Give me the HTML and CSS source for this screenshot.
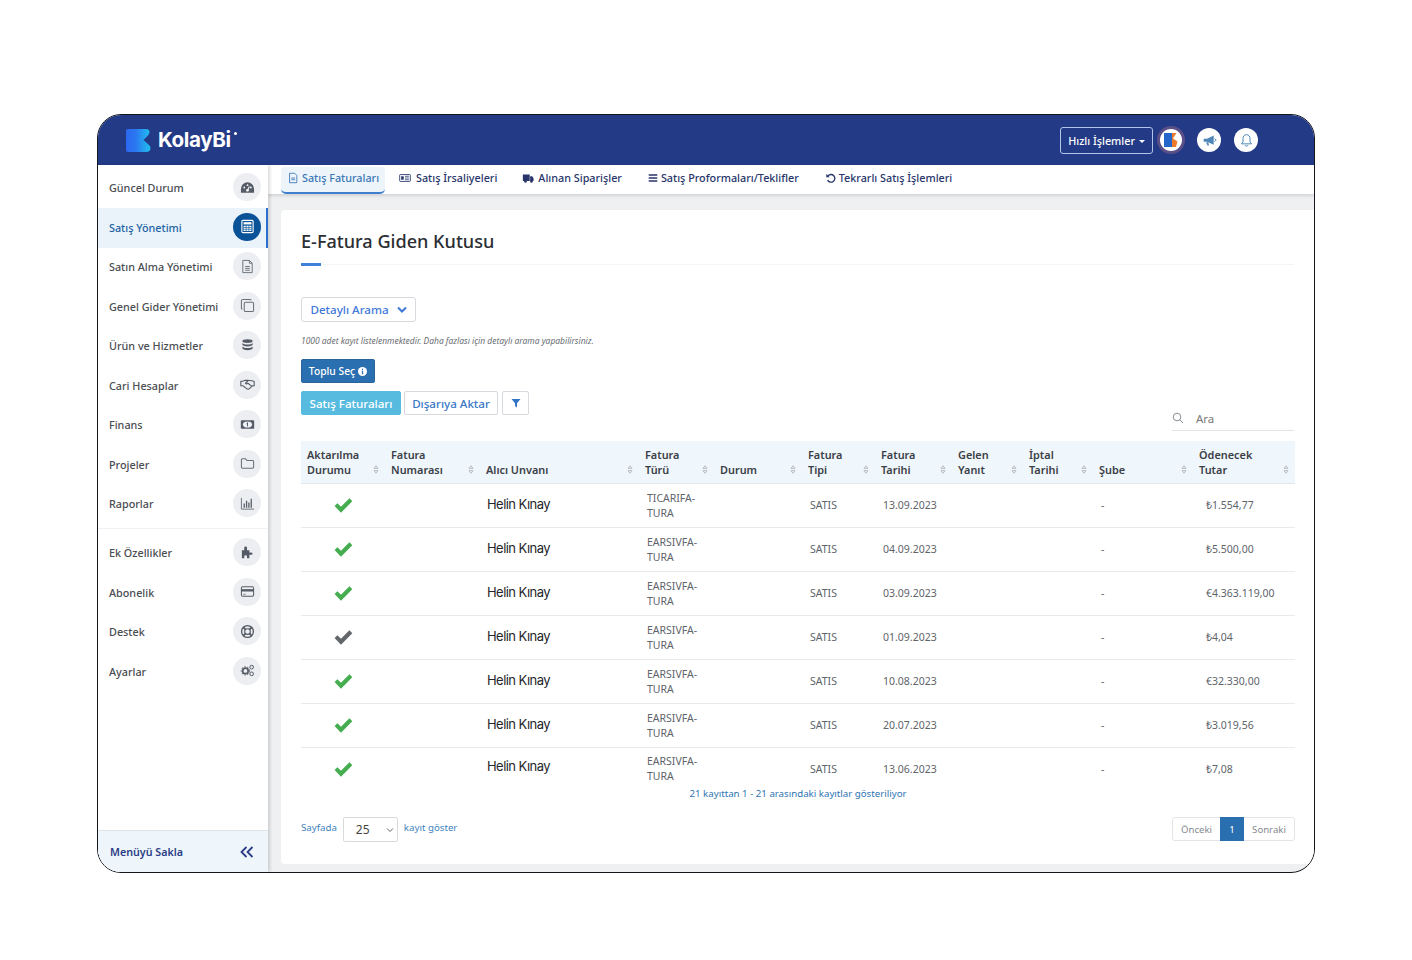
FILE: index.html
```html
<!DOCTYPE html>
<html lang="tr">
<head>
<meta charset="utf-8">
<title>KolayBi</title>
<link rel="stylesheet" href="styles.css">
</head>
<body>
<svg class="defs" width="0" height="0" aria-hidden="true">
  <symbol id="check" viewBox="0 0 20 16"><path d="M1.5 8.5 4.2 5.8 7.6 9.2 15.6 1.2 18.4 4 7.6 14.8Z" fill="currentColor"/></symbol>
  <symbol id="sort" viewBox="0 0 6 10"><path d="M3 .8 5.2 3.8H.8Z M3 9.2 .8 6.2H5.2Z" fill="none" stroke="currentColor" stroke-width=".8"/></symbol>
  <linearGradient id="lg" x1="0" y1="0" x2="1" y2="0"><stop offset="0" stop-color="#2b68f0"/><stop offset=".4" stop-color="#2b78f0"/><stop offset="1" stop-color="#20c0f0"/></linearGradient>
</svg>
<div class="frame">
  <header class="topbar">
    <div class="logo">
      <svg class="logo-mark" viewBox="0 0 25 23"><path d="M2 0H20Q23.500 0 23.500 3 23.500 5 21.500 7L17.500 11 22.500 15.500Q24.500 17 24.500 19 24.500 23 20 23H2A2 2 0 0 1 0 21V2A2 2 0 0 1 2 0Z" fill="url(#lg)"/></svg>
      <span class="logo-text">KolayBi</span><span class="logo-dot"></span>
    </div>
    <div class="top-actions">
      <button class="quick">Hızlı İşlemler <span class="caret"></span></button>
      <span class="halo"><span class="round"><svg viewBox="0 0 18 18" width="18" height="18"><path d="M2 2H10V16H2Z" fill="#2466c9"/><path d="M10 2H14.500L11 7.500 15.500 10.500 14 16H10Z" fill="#ef7a2c"/></svg></span></span>
      <span class="round"><svg viewBox="0 0 18 18" width="15" height="15"><path d="M2 7H6L14 3V14L6 10.500H2Z" fill="#4f86b8"/><path d="M5 11 6.500 15H8.500L7.500 11Z" fill="#4f86b8"/><path d="M15 6.500 17 8.500 15 10.500" fill="none" stroke="#4f86b8" stroke-width="1.200"/></svg></span>
      <span class="round"><svg viewBox="0 0 18 18" width="15" height="15"><path d="M9 2C6 2 4.800 4.400 4.800 7V10.500L3 13H15L13.200 10.500V7C13.200 4.400 12 2 9 2Z M7.200 14.500C7.500 16.200 10.500 16.200 10.800 14.500" fill="none" stroke="#4f86b8" stroke-width="1.200"/></svg></span>
    </div>
  </header>
  <div class="main">
    <aside class="sidebar">
      <nav class="menu">
        <a class="item"><span>Güncel Durum</span><i class="ico"><svg viewBox="0 0 16 16"><path d="M8 2.500A7 7 0 0 0 1 9.500V13.500H15V9.500A7 7 0 0 0 8 2.500Z" fill="#555b66"/><circle cx="4.500" cy="8" r="1" fill="#eef0f3"/><circle cx="8" cy="5.500" r="1" fill="#eef0f3"/><circle cx="11.500" cy="8" r="1" fill="#eef0f3"/><path d="M8 11 10 7" stroke="#eef0f3" stroke-width="1.200"/><circle cx="8" cy="11" r="1.500" fill="#eef0f3"/></svg></i></a>
        <a class="item active"><span>Satış Yönetimi</span><i class="ico"><svg viewBox="0 0 16 16"><rect x="2" y="1.500" width="12" height="13" rx="1.200" fill="none" stroke="#fff" stroke-width="1.200"/><rect x="3.800" y="3.400" width="8.400" height="2.400" fill="#fff"/><path d="M3.800 7.200H12.200V12.800H3.800Z" fill="#fff"/><path d="M6.500 7V13M9.500 7V13M3.500 9.100H12.500M3.500 11H12.500" stroke="#0a5298" stroke-width=".7"/></svg></i></a>
        <a class="item"><span>Satın Alma Yönetimi</span><i class="ico"><svg viewBox="0 0 16 16"><path d="M3 1.500H10L13 4.500V14.500H3Z M10 1.500V4.500H13 M5.500 8H10.500M5.500 10H10.500M5.500 12H10.500" fill="none" stroke="#6a7079" stroke-width="1"/></svg></i></a>
        <a class="item"><span>Genel Gider Yönetimi</span><i class="ico"><svg viewBox="0 0 16 16"><rect x="4.500" y="4.500" width="10" height="10" rx="1.500" fill="none" stroke="#6a7079" stroke-width="1.100"/><path d="M12 2.500A1.200 1.200 0 0 0 11 1.500H3A1.500 1.500 0 0 0 1.500 3V11A1.200 1.200 0 0 0 2.500 12" fill="none" stroke="#6a7079" stroke-width="1.100"/></svg></i></a>
        <a class="item"><span>Ürün ve Hizmetler</span><i class="ico"><svg viewBox="0 0 16 16"><ellipse cx="8" cy="3.200" rx="5.500" ry="2" fill="#555b66"/><path d="M2.500 5V7C2.500 8.200 5 9 8 9S13.500 8.200 13.500 7V5C13.500 6.200 11 7 8 7S2.500 6.200 2.500 5Z M2.500 8.800V11C2.500 12.200 5 13 8 13S13.500 12.200 13.500 11V8.800C13.500 10 11 10.700 8 10.700S2.500 10 2.500 8.800Z" fill="#555b66"/></svg></i></a>
        <a class="item"><span>Cari Hesaplar</span><i class="ico"><svg viewBox="0 0 18 16"><path d="M1 4H3.500L6 3H9.500L13 3.500H15L17 4.500V9.500H15L10.500 13.500Q9 14 8 13L3.500 9.500H1Z" fill="none" stroke="#555b66" stroke-width="1.300"/><path d="M9.500 3.500 6.500 6.500Q7.500 8 9.500 6.500L14 10" fill="none" stroke="#555b66" stroke-width="1.300"/></svg></i></a>
        <a class="item"><span>Finans</span><i class="ico"><svg viewBox="0 0 18 16"><rect x="1" y="2.800" width="16" height="10.400" rx="1" fill="#555b66"/><ellipse cx="9" cy="8" rx="5.500" ry="3.700" fill="#eef0f3"/><path d="M9 5.800V10.200M8 6.500 9 5.800" stroke="#555b66" stroke-width="1.200" fill="none"/></svg></i></a>
        <a class="item"><span>Projeler</span><i class="ico"><svg viewBox="0 0 16 16"><path d="M1.500 4A1 1 0 0 1 2.500 3H6L7.500 4.800H13.500A1 1 0 0 1 14.500 5.800V12A1 1 0 0 1 13.500 13H2.500A1 1 0 0 1 1.500 12Z" fill="none" stroke="#6a7079" stroke-width="1.100"/></svg></i></a>
        <a class="item"><span>Raporlar</span><i class="ico"><svg viewBox="0 0 16 16"><path d="M1.500 2V14H15" fill="none" stroke="#6a7079" stroke-width="1"/><path d="M4.500 8V12.500M7 5V12.500M9.500 7V12.500M12 3V12.500" stroke="#5a606a" stroke-width="1.400"/></svg></i></a>
        <div class="rule"></div>
        <a class="item"><span>Ek Özellikler</span><i class="ico"><svg viewBox="0 0 16 16"><path d="M2 5.500H4.500V3Q4.500 1.500 6 1.500T7.500 3V5.500H10V8H11.500Q13.500 8 13.500 9.300T11.500 10.500H10V14H7.500V12.500Q7.500 11 6 11T4.500 12.500V14H2Z" fill="#555b66"/></svg></i></a>
        <a class="item"><span>Abonelik</span><i class="ico"><svg viewBox="0 0 16 16"><rect x="1.500" y="3" width="13" height="10" rx="1.300" fill="none" stroke="#555b66" stroke-width="1.100"/><rect x="1.500" y="5.500" width="13" height="2.500" fill="#555b66"/><path d="M3.500 11H6" stroke="#555b66" stroke-width=".8"/></svg></i></a>
        <a class="item"><span>Destek</span><i class="ico"><svg viewBox="0 0 16 16"><circle cx="8" cy="8" r="6.300" fill="none" stroke="#555b66" stroke-width="1.400"/><circle cx="8" cy="8" r="3" fill="none" stroke="#555b66" stroke-width="1.200"/><path d="M3.500 3.500 6 6M12.500 3.500 10 6M3.500 12.500 6 10M12.500 12.500 10 10" stroke="#555b66" stroke-width="2"/></svg></i></a>
        <a class="item"><span>Ayarlar</span><i class="ico"><svg viewBox="0 0 18 16"><circle cx="6.500" cy="8.500" r="3.300" fill="none" stroke="#555b66" stroke-width="2"/><circle cx="6.500" cy="8.500" r="5" fill="none" stroke="#555b66" stroke-width="1.200" stroke-dasharray="1.800 1.800"/><circle cx="14" cy="4" r="2.200" fill="none" stroke="#555b66" stroke-width="1.200"/><circle cx="14" cy="12" r="2.200" fill="none" stroke="#555b66" stroke-width="1.200"/></svg></i></a>
      </nav>
      <div class="hide-menu">
        <span>Menüyü Sakla</span>
        <svg viewBox="0 0 14 12" width="14" height="12"><path d="M6.500 1 1.500 6 6.500 11M12.500 1 7.500 6 12.500 11" fill="none" stroke="#2b3d86" stroke-width="1.800"/></svg>
      </div>
    </aside>
    <div class="content">
      <div class="tabs">
        <a class="tab on"><svg viewBox="0 0 14 14"><path d="M3 1.500H9L11.500 4V12.500H3Z M5 7H9.500M5 9H9.500" fill="none" stroke="#3b75b5" stroke-width="1"/></svg>Satış Faturaları</a>
        <a class="tab t2"><svg viewBox="0 0 14 14"><rect x=".8" y="3" width="12.400" height="8" rx=".8" fill="none" stroke="#27356a" stroke-width="1"/><rect x="2.500" y="5" width="3" height="4" fill="#27356a"/><path d="M7 5H11.500M7 7H11.500M7 9H11.500" stroke="#27356a" stroke-width=".9"/></svg>Satış İrsaliyeleri</a>
        <a class="tab t3"><svg viewBox="0 0 14 14"><path d="M1 3H9V10.500H1Z M9.500 5H12L13.500 7.500V10.500H9.500Z" fill="#27356a"/><circle cx="4" cy="11" r="1.500" fill="#27356a"/><circle cx="11" cy="11" r="1.500" fill="#27356a"/></svg>Alınan Siparişler</a>
        <a class="tab t4"><svg viewBox="0 0 14 14"><path d="M2 3.500H12M2 7H12M2 10.500H12" stroke="#27356a" stroke-width="1.500"/></svg>Satış Proformaları/Teklifler</a>
        <a class="tab t5"><svg viewBox="0 0 14 14"><path d="M3.500 4.500A4.500 4.500 0 1 1 3 9.500" fill="none" stroke="#27356a" stroke-width="1.600"/><path d="M1.500 2V6H5.500Z" fill="#27356a"/></svg>Tekrarlı Satış İşlemleri</a>
      </div>
      <section class="card">
        <h1>E-Fatura Giden Kutusu</h1>
        <div class="title-rule"><span></span></div>
        <button class="detail">Detaylı Arama <svg viewBox="0 0 10 8" width="10" height="8"><path d="M1 1.500 5 5.500 9 1.500" fill="none" stroke="#3f78d6" stroke-width="2"/></svg></button>
        <p class="note">1000 adet kayıt listelenmektedir. Daha fazlası için detaylı arama yapabilirsiniz.</p>
        <button class="bulk">Toplu Seç <svg viewBox="0 0 10 10" width="9" height="9"><circle cx="5" cy="5" r="5" fill="#fff"/><path d="M5 4.200V8M5 2V3.200" stroke="#2a6fb0" stroke-width="1.400"/></svg></button>
        <div class="btn-row">
          <button class="b-cyan">Satış Faturaları</button>
          <button class="b-line">Dışarıya Aktar</button>
          <button class="b-line b-filter"><svg viewBox="0 0 10 10" width="10" height="10"><path d="M.5 1H9.500L6 5.200V9.500L4 8V5.200Z" fill="#3273c4"/></svg></button>
        </div>
        <div class="search">
          <div class="search-box"><svg viewBox="0 0 12 12" width="12" height="12"><circle cx="5" cy="5" r="3.800" fill="none" stroke="#8a8f96" stroke-width="1"/><path d="M7.800 7.800 11 11" stroke="#8a8f96" stroke-width="1"/></svg><span>Ara</span></div>
        </div>
        <table class="grid">
          <colgroup>
            <col class="c1"><col class="c2"><col class="c3"><col class="c4"><col class="c5"><col class="c6"><col class="c7"><col class="c8"><col class="c9"><col class="c10"><col class="c11">
          </colgroup>
          <thead>
            <tr>
              <th><div class="hd"><span>Aktarılma<br>Durumu</span><svg class="s"><use href="#sort"/></svg></div></th>
              <th><div class="hd"><span>Fatura<br>Numarası</span><svg class="s"><use href="#sort"/></svg></div></th>
              <th><div class="hd"><span>Alıcı Unvanı</span><svg class="s"><use href="#sort"/></svg></div></th>
              <th><div class="hd"><span>Fatura<br>Türü</span><svg class="s"><use href="#sort"/></svg></div></th>
              <th><div class="hd"><span>Durum</span><svg class="s"><use href="#sort"/></svg></div></th>
              <th><div class="hd"><span>Fatura<br>Tipi</span><svg class="s"><use href="#sort"/></svg></div></th>
              <th><div class="hd"><span>Fatura<br>Tarihi</span><svg class="s"><use href="#sort"/></svg></div></th>
              <th><div class="hd"><span>Gelen<br>Yanıt</span><svg class="s"><use href="#sort"/></svg></div></th>
              <th><div class="hd"><span>İptal<br>Tarihi</span><svg class="s"><use href="#sort"/></svg></div></th>
              <th><div class="hd"><span>Şube</span><svg class="s"><use href="#sort"/></svg></div></th>
              <th><div class="hd"><span>Ödenecek<br>Tutar</span><svg class="s"><use href="#sort"/></svg></div></th>
            </tr>
          </thead>
          <tbody>
            <tr><td class="ok"><svg><use href="#check"/></svg></td><td></td><td class="name">Helin Kınay</td><td>TICARIFA-<br>TURA</td><td></td><td>SATIS</td><td>13.09.2023</td><td></td><td></td><td class="dash">-</td><td class="amt">₺1.554,77</td></tr>
            <tr><td class="ok"><svg><use href="#check"/></svg></td><td></td><td class="name">Helin Kınay</td><td>EARSIVFA-<br>TURA</td><td></td><td>SATIS</td><td>04.09.2023</td><td></td><td></td><td class="dash">-</td><td class="amt">₺5.500,00</td></tr>
            <tr><td class="ok"><svg><use href="#check"/></svg></td><td></td><td class="name">Helin Kınay</td><td>EARSIVFA-<br>TURA</td><td></td><td>SATIS</td><td>03.09.2023</td><td></td><td></td><td class="dash">-</td><td class="amt">€4.363.119,00</td></tr>
            <tr><td class="ok gray"><svg><use href="#check"/></svg></td><td></td><td class="name">Helin Kınay</td><td>EARSIVFA-<br>TURA</td><td></td><td>SATIS</td><td>01.09.2023</td><td></td><td></td><td class="dash">-</td><td class="amt">₺4,04</td></tr>
            <tr><td class="ok"><svg><use href="#check"/></svg></td><td></td><td class="name">Helin Kınay</td><td>EARSIVFA-<br>TURA</td><td></td><td>SATIS</td><td>10.08.2023</td><td></td><td></td><td class="dash">-</td><td class="amt">€32.330,00</td></tr>
            <tr><td class="ok"><svg><use href="#check"/></svg></td><td></td><td class="name">Helin Kınay</td><td>EARSIVFA-<br>TURA</td><td></td><td>SATIS</td><td>20.07.2023</td><td></td><td></td><td class="dash">-</td><td class="amt">₺3.019,56</td></tr>
            <tr class="last"><td class="ok"><svg><use href="#check"/></svg></td><td></td><td class="name">Helin Kınay</td><td>EARSIVFA-<br>TURA</td><td></td><td>SATIS</td><td>13.06.2023</td><td></td><td></td><td class="dash">-</td><td class="amt">₺7,08</td></tr>
          </tbody>
        </table>
        <p class="info">21 kayıttan 1 - 21 arasındaki kayıtlar gösteriliyor</p>
        <div class="foot">
          <div class="len"><span>Sayfada</span><span class="sel">25<svg viewBox="0 0 8 6" width="8" height="6"><path d="M1 1.500 4 4.500 7 1.500" fill="none" stroke="#666" stroke-width="1"/></svg></span><span>kayıt göster</span></div>
          <div class="pager"><span>Önceki</span><span class="cur">1</span><span>Sonraki</span></div>
        </div>
      </section>
    </div>
  </div>
</div>
</body>
</html>
```
FILE: styles.css
```css
* { box-sizing: border-box; }
html, body { margin: 0; background: #fff; }
body { padding: 114px 0 0 97px; font-family: "Noto Sans", "Open Sans", sans-serif; color: #333; }
.defs { position: absolute; }
button { font-family: inherit; cursor: pointer; }
.frame { width: 1218px; height: 759px; border: 1px solid #14161c; border-radius: 24px; overflow: hidden; display: flex; flex-direction: column; background: #eef0f2; }

.topbar { height: 50px; flex: none; background: #233a86; display: flex; align-items: center; justify-content: space-between; padding: 0 56px 0 28px; }
.logo { display: flex; align-items: center; }
.logo-mark { width: 25px; height: 23px; margin-right: 7px; }
.logo-text { font-family: Inter, sans-serif; font-weight: 700; font-size: 20.6px; letter-spacing: -.4px; color: #fff; line-height: 1; }
.logo-dot { width: 3px; height: 3px; border-radius: 50%; background: #fff; margin: -13px 0 0 3px; }
.top-actions { display: flex; align-items: center; gap: 13px; }
.quick { height: 27px; width: 93px; margin-right: -7px; padding: 0; background: transparent; border: 1.5px solid #b2c4e8; border-radius: 3px; color: #fff; font-size: 10.8px; font-weight: 500; white-space: nowrap; }
.caret { display: inline-block; width: 0; height: 0; margin-left: 1px; vertical-align: 2px; border: 3px solid transparent; border-top-color: #fff; border-bottom: 0; }
.round { width: 24px; height: 24px; border-radius: 50%; background: #fff; display: flex; align-items: center; justify-content: center; }
.halo { width: 28px; height: 28px; border-radius: 50%; background: #5a4f86; display: flex; align-items: center; justify-content: center; margin: 0 -1px 0 -2px; }
.halo .round { width: 22px; height: 22px; }

.main { flex: 1; display: flex; min-height: 0; }
.sidebar { width: 170px; flex: none; background: #fff; display: flex; flex-direction: column; box-shadow: 2px 0 3px rgba(0,0,0,.14); z-index: 2; }
.menu { flex: 1; padding-top: 3.5px; }
.item { height: 39.5px; display: flex; align-items: center; justify-content: space-between; padding: 0 7px 0 11px; font-size: 10.8px; font-weight: 500; color: #4a4d52; }
.item span { margin-top: -1px; }
.item.active { background: #eaf3f9; color: #1d62a5; border-right: 2px solid #2a6fd0; padding-right: 5px; }
.ico { width: 28px; height: 28px; border-radius: 50%; background: #eceef1; display: flex; align-items: center; justify-content: center; margin-top: -2px; }
.ico svg { width: 15px; height: 15px; }
.active .ico { background: #0a5298; }
.rule { height: 1px; margin: 4px 0 4.5px; background: #f1f2f4; }
.hide-menu { height: 42px; background: #eff6fb; border-top: 1px solid #dfe3e7; display: flex; align-items: center; justify-content: space-between; padding: 0 14px 0 12px; font-size: 10.7px; font-weight: 600; color: #2b3d86; }

.content { flex: 1; min-width: 0; display: flex; flex-direction: column; }
.tabs { height: 29px; flex: none; background: #fff; box-shadow: 0 2px 3px rgba(0,0,0,.12); display: flex; align-items: flex-end; padding: 2px 0 0 13px; position: relative; }
.tab { height: 27px; display: flex; align-items: center; gap: 2px; font-size: 10.8px; font-weight: 500; color: #27356a; white-space: nowrap; padding-bottom: 6px; }
.tab svg { width: 12px; height: 12px; flex: none; }
.tab.on { width: 104px; padding: 0 0 4px 6px; gap: 3px; background: #edf5fb; color: #3b75b5; border-bottom: 2px solid #3f7fd0; border-radius: 3px 3px 5px 5px; }
.t2 { margin-left: 14px; gap: 5px; }
.t3 { margin-left: 25px; gap: 4px; }
.t4 { margin-left: 25px; }
.t5 { margin-left: 26px; }

.card { margin: 16px 0 8px 13px; flex: 1; background: #fff; border-radius: 4px 0 0 4px; padding: 0 20px; display: flex; flex-direction: column; align-items: flex-start; }
h1 { margin: 19px 0 0; font-size: 18.1px; font-weight: 500; line-height: 25px; color: #2b2e33; }
.title-rule { width: 100%; height: 3px; margin-top: 9px; display: flex; align-items: center; background: linear-gradient(#fff 1px, #f3f4f5 1px, #f3f4f5 2px, #fff 2px); }
.title-rule span { width: 20px; height: 3px; background: #3f7fd8; }
.detail { margin-top: 31px; height: 25px; width: 115px; padding: 0; display: flex; align-items: center; justify-content: center; gap: 8px; background: #fff; border: 1px solid #d6d9dd; border-radius: 3px; color: #3f78d6; font-size: 11.6px; font-weight: 500; }
.note { margin: 12px 0 0; height: 14px; font-size: 8.45px; line-height: 14px; font-style: italic; color: #6a6e74; white-space: nowrap; }
.bulk { margin-top: 11px; width: 74px; height: 24px; padding: 0; background: #2a6fb0; border: 1px solid #2a6399; border-radius: 2px; color: #fff; font-size: 10.3px; font-weight: 500; display: flex; align-items: center; justify-content: center; gap: 3px; }
.btn-row { display: flex; gap: 3px; margin-top: 8px; }
.btn-row button { height: 24px; padding: 0; font-size: 11.6px; border-radius: 2px; }
.b-cyan { width: 100px; background: #56bbdf; border: 1px solid #56bbdf; color: #fff; font-weight: 500; }
.b-line { width: 94px; background: #fff; border: 1px solid #d6d9dd; color: #3a78c6; font-weight: 500; }
.btn-row .b-filter { width: 27px; margin-left: 1px; display: flex; align-items: center; justify-content: center; }
.search { width: 100%; display: flex; justify-content: flex-end; margin-top: -2px; height: 18px; }
.search-box { width: 122px; height: 18px; border-bottom: 1px solid #e2e4e7; display: flex; align-items: center; gap: 12px; font-size: 11.5px; color: #777; padding-bottom: 7px; }
.grid { width: 994px; margin-top: 10px; border-collapse: collapse; table-layout: fixed; }
.c1 { width: 84px; } .c2 { width: 95px; } .c3 { width: 159px; } .c4 { width: 75px; } .c5 { width: 88px; } .c6 { width: 73px; } .c7 { width: 77px; } .c8 { width: 71px; } .c9 { width: 70px; } .c10 { width: 100px; } .c11 { width: 102px; }
th { height: 42px; padding: 6px 6px 6px; background: #eff7fd; border-bottom: 1px solid #e3e7ea; vertical-align: bottom; text-align: left; font-size: 10.9px; font-weight: 600; line-height: 15px; color: #3c4046; }
.hd { display: flex; justify-content: space-between; align-items: flex-end; }
.s { width: 6px; height: 9px; margin-bottom: 3px; color: #a3a8ae; flex: none; }
td { height: 44px; padding: 0 6px 0 8px; border-bottom: 1px solid #e9eaec; font-size: 10.5px; line-height: 15px; color: #60646a; vertical-align: middle; }
.last td { border-bottom: 0; height: 39px; padding-top: 4px; padding-bottom: 0; }
.ok { color: #44ad4f; padding: 0; }
.ok svg { width: 21px; height: 17px; display: block; margin: 0 auto; }
.gray { color: #63666b; }
td.name { font-family: Inter, sans-serif; font-size: 13px; letter-spacing: -.55px; color: #25272a; padding: 0 6px 2px 7px; }
td.dash { padding-left: 8px; }
td.amt { padding-left: 13px; white-space: nowrap; }
.info { width: 994px; margin: 1px 0 0; text-align: center; font-size: 9.7px; line-height: 12px; color: #2e74b2; }
.foot { width: 994px; display: flex; justify-content: space-between; align-items: center; margin-top: 17px; }
.len { display: flex; align-items: center; gap: 6px; font-size: 9.7px; color: #3f83be; }
.len span:first-child, .len span:last-child { margin-top: -3px; }
.sel { width: 55px; height: 25px; display: flex; align-items: center; justify-content: space-between; padding: 1px 3px 0 12px; border: 1px solid #d8dbde; border-radius: 2px; font-size: 12px; color: #444; }
.pager { display: flex; height: 24px; border: 1px solid #e2e4e7; border-radius: 3px; font-size: 9.6px; color: #858a90; }
.pager span { display: flex; align-items: center; justify-content: center; width: 47px; }
.pager span:last-child { width: 50px; }
.pager .cur { width: 24px; background: #2a6fb0; color: #fff; margin: -1px 0; }
```
